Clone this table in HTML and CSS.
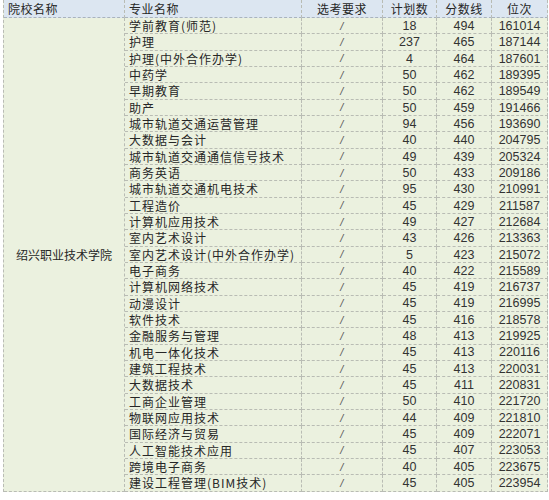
FILE: index.html
```html
<!DOCTYPE html>
<html lang="zh">
<head>
<meta charset="utf-8">
<link rel="stylesheet" href="styles.css">
</head>
<body>
<div class="sheet" id="sheet">
  <div class="c h left">院校名称</div>
  <div class="c h left">专业名称</div>
  <div class="c h">选考要求</div>
  <div class="c h">计划数</div>
  <div class="c h">分数线</div>
  <div class="c h">位次</div>
  <div class="c school">绍兴职业技术学院</div>
</div>
<script src="app.js"></script>
</body>
</html>
```
FILE: app.js
```js
const rows = [
["学前教育(师范)",18,494,161014],
["护理",237,465,187144],
["护理(中外合作办学)",4,464,187601],
["中药学",50,462,189395],
["早期教育",50,462,189549],
["助产",50,459,191466],
["城市轨道交通运营管理",94,456,193690],
["大数据与会计",40,440,204795],
["城市轨道交通通信信号技术",49,439,205324],
["商务英语",50,433,209186],
["城市轨道交通机电技术",95,430,210991],
["工程造价",45,429,211587],
["计算机应用技术",49,427,212684],
["室内艺术设计",43,426,213363],
["室内艺术设计(中外合作办学)",5,423,215072],
["电子商务",40,422,215589],
["计算机网络技术",45,419,216737],
["动漫设计",45,419,216995],
["软件技术",45,416,218578],
["金融服务与管理",48,413,219925],
["机电一体化技术",45,413,220116],
["建筑工程技术",45,413,220031],
["大数据技术",45,411,220831],
["工商企业管理",50,410,221720],
["物联网应用技术",44,409,221810],
["国际经济与贸易",45,409,222071],
["人工智能技术应用",45,407,223053],
["跨境电子商务",40,405,223675],
["建设工程管理(BIM技术)",45,405,223954]
];
const sheet = document.getElementById('sheet');
rows.forEach(r => {
  const cells = [
    ['c major', r[0]],
    ['c req', '/'],
    ['c num', r[1]],
    ['c num', r[2]],
    ['c num', r[3]]
  ];
  cells.forEach(([cls, txt]) => {
    const d = document.createElement('div');
    d.className = cls;
    d.textContent = txt;
    sheet.appendChild(d);
  });
});
```
FILE: styles.css
```css
html, body {
  margin: 0;
  padding: 0;
  background: #ffffff;
}
.sheet {
  display: grid;
  grid-template-columns: 121px 177px 81px 54px 55px 56px;
  grid-template-rows: 18px repeat(29, 16.34px);
  margin-left: 3px;
  width: max-content;
  border-left: 1px dashed #b9bcb4;
  font-family: "Noto Sans CJK SC", "Liberation Sans", sans-serif;
  font-size: 12px;
  color: #262626;
  background: #ebf1df;
}
.c {
  box-sizing: border-box;
  border-right: 1px dashed #b9bcb4;
  border-bottom: 1px dashed #b9bcb4;
  display: flex;
  align-items: center;
  justify-content: center;
  line-height: 1;
  white-space: nowrap;
  overflow: hidden;
  letter-spacing: 0.5px;
  padding-top: 1px;
}
.h {
  background: #dce6f1;
  border-bottom-color: #a9b3bd;
}
.left {
  justify-content: flex-start;
  padding-left: 4px;
}
.school {
  grid-column: 1;
  grid-row: 2 / span 29;
  letter-spacing: 0;
}
.major {
  justify-content: flex-start;
  padding-left: 4px;
  letter-spacing: 1px;
}
.req {
  font-family: "Liberation Sans", sans-serif;
  font-style: italic;
  font-size: 11px;
  color: #555;
}
.num {
  font-family: "Liberation Sans", sans-serif;
  font-size: 12.5px;
  letter-spacing: 0;
  color: #333;
}
```
